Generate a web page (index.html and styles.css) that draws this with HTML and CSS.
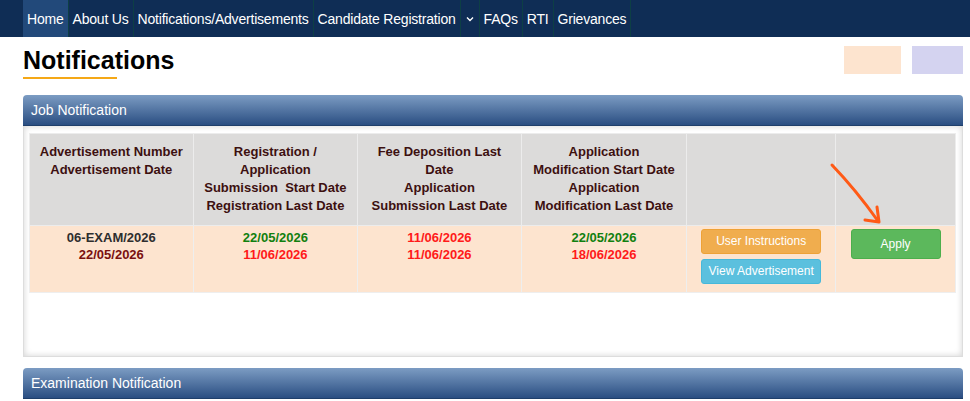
FILE: index.html
```html
<!DOCTYPE html>
<html lang="en">

<head>
    <meta charset="UTF-8">
    <meta name="viewport" content="width=device-width, initial-scale=1.0">
    <title>Notifications</title>
    <link rel="stylesheet" href="styles.css">
</head>

<body>
    <!-- top menu -->
    <nav class="topnav">
        <a class="nav-item active" href="#">Home</a>
        <a class="nav-item" href="#">About Us</a>
        <a class="nav-item" href="#">Notifications/Advertisements</a>
        <a class="nav-item" href="#">Candidate Registration</a>
        <a class="nav-item caret" href="#">
            <svg width="8" height="6" viewBox="0 0 8 6"><path d="M1 1.5 L4 4.5 L7 1.5" fill="none" stroke="#fff" stroke-width="1.4"/></svg>
        </a>
        <a class="nav-item" href="#">FAQs</a>
        <a class="nav-item" href="#">RTI</a>
        <a class="nav-item" href="#">Grievances</a>
    </nav>

    <div class="page">
        <div class="title-row">
            <h1 class="page-title">Notifications</h1>
            <div class="legend">
                <span class="legend-box peach"></span>
                <span class="legend-box lavender"></span>
            </div>
        </div>

        <!-- Job notification panel -->
        <div class="panel">
            <div class="panel-head">Job Notification</div>
            <div class="panel-body">
                <table class="notif-table">
                    <thead>
                        <tr>
                            <th class="c1">Advertisement Number<br>Advertisement Date</th>
                            <th class="c2">Registration /<br>Application<br>Submission&nbsp; Start Date<br>Registration Last Date</th>
                            <th class="c3">Fee Deposition Last<br>Date<br>Application<br>Submission Last Date</th>
                            <th class="c4">Application<br>Modification Start Date<br>Application<br>Modification Last Date</th>
                            <th class="c5"></th>
                            <th class="c6"></th>
                        </tr>
                    </thead>
                    <tbody>
                        <tr>
                            <td><span class="dark">06-EXAM/2026</span><br><span class="maroon">22/05/2026</span></td>
                            <td><span class="green">22/05/2026</span><br><span class="red">11/06/2026</span></td>
                            <td><span class="red">11/06/2026</span><br><span class="red">11/06/2026</span></td>
                            <td><span class="green">22/05/2026</span><br><span class="red">18/06/2026</span></td>
                            <td class="btn-cell">
                                <a class="btn btn-warning" href="#">User Instructions</a>
                                <a class="btn btn-info" href="#">View Advertisement</a>
                            </td>
                            <td class="btn-cell">
                                <a class="btn btn-success" href="#">Apply</a>
                            </td>
                        </tr>
                    </tbody>
                </table>
            </div>
        </div>

        <!-- Examination notification panel -->
        <div class="panel">
            <div class="panel-head">Examination Notification</div>
        </div>
    </div>

    <!-- hand drawn arrow -->
    <svg class="arrow" width="970" height="401" viewBox="0 0 970 401">
        <path d="M832 165 Q856 190 878 221" fill="none" stroke="#ff5a16" stroke-width="3" stroke-linecap="round"/>
        <path d="M865 220 L879 222 L877 207" fill="none" stroke="#ff5a16" stroke-width="3" stroke-linecap="round" stroke-linejoin="round"/>
    </svg>
</body>

</html>
```

FILE: styles.css
```css
/* base */
body {
    font-family: "Liberation Sans", Arial, sans-serif;
    margin: 0;
    padding: 0;
    background: #ffffff;
    color: #333;
    position: relative;
}

/* top menu */
.topnav {
    display: flex;
    align-items: stretch;
    height: 37px;
    padding-left: 23px;
    background: #0f2d55;
}

.nav-item {
    display: flex;
    align-items: center;
    padding: 0 4px;
    color: #ffffff;
    font-size: 14px;
    text-decoration: none;
    border-right: 1px solid #0d3f45;
    letter-spacing: -0.2px;
}

.nav-item.active {
    background: #22497a;
}

.nav-item.caret {
    padding: 0 5px;
}

/* page */
.page {
    padding: 0 7px 0 23px;
}

.title-row {
    display: flex;
    justify-content: space-between;
    align-items: flex-start;
    height: 58px;
}

.page-title {
    margin: 9px 0 0;
    font-size: 25px;
    font-weight: bold;
    color: #000;
    line-height: 28px;
}

.page-title::after {
    content: "";
    display: block;
    width: 94px;
    height: 2px;
    margin-top: 3px;
    background: #f5a816;
}

.legend {
    display: flex;
    gap: 11px;
    margin-top: 9px;
}

.legend-box {
    display: block;
    height: 28px;
}

.peach {
    width: 57px;
    background: #fde4cf;
}

.lavender {
    width: 51px;
    background: #d4d3f0;
}

/* panels */
.panel {
    width: 940px;
    margin-bottom: 11px;
}

.panel-head {
    height: 31px;
    line-height: 30px;
    padding-left: 8px;
    color: #ffffff;
    font-size: 14px;
    border-radius: 4px 4px 0 0;
    background: linear-gradient(#7c9cc3, #2a4e82);
    border-bottom: 1px solid #1f3f6b;
    box-sizing: border-box;
}

.panel-body {
    height: 231px;
    padding: 7px 6px 7px 5px;
    box-sizing: border-box;
    border: 1px solid #dddddd;
    border-top: none;
    box-shadow: inset 0 0 6px rgba(0, 0, 0, 0.18);
}

/* table */
.notif-table {
    width: 100%;
    border-collapse: collapse;
    font-size: 13px;
    font-weight: bold;
    text-align: center;
}

.notif-table th {
    height: 92px;
    padding: 0 2px;
    vertical-align: top;
    padding-top: 9px;
    box-sizing: border-box;
    line-height: 18px;
    background: #dcdbda;
    color: #3d1010;
    border: 1px solid #ececec;
}

.notif-table td {
    height: 67px;
    vertical-align: top;
    padding: 3px 2px 0;
    line-height: 17px;
    background: #fde4cf;
    border: 1px solid #eeeeee;
    box-sizing: border-box;
}

.c1 { width: 164px; }
.c2 { width: 165px; }
.c3 { width: 164px; }
.c4 { width: 166px; }
.c5 { width: 149px; }
.c6 { width: 120px; }

.dark { color: #2e2e2e; }
.maroon { color: #7a1010; }
.green { color: #11800f; }
.red { color: #ff1a1a; }

/* buttons */
.btn-cell {
    line-height: normal;
}

.notif-table td.btn-cell {
    padding-top: 3px;
}

.btn {
    display: block;
    margin: 0 auto 5px;
    color: #ffffff;
    font-size: 12px;
    font-weight: normal;
    text-decoration: none;
    border-radius: 3px;
    box-sizing: border-box;
}

.btn-warning {
    width: 120px;
    height: 25px;
    line-height: 23px;
    background: #f0ad4e;
    border: 1px solid #eea236;
}

.btn-info {
    width: 120px;
    height: 25px;
    line-height: 23px;
    background: #5bc0de;
    border: 1px solid #46b8da;
}

.btn-success {
    width: 90px;
    height: 30px;
    line-height: 28px;
    background: #5cb85c;
    border: 1px solid #4cae4c;
}

/* arrow overlay */
.arrow {
    position: absolute;
    left: 0;
    top: 0;
    pointer-events: none;
}
```
